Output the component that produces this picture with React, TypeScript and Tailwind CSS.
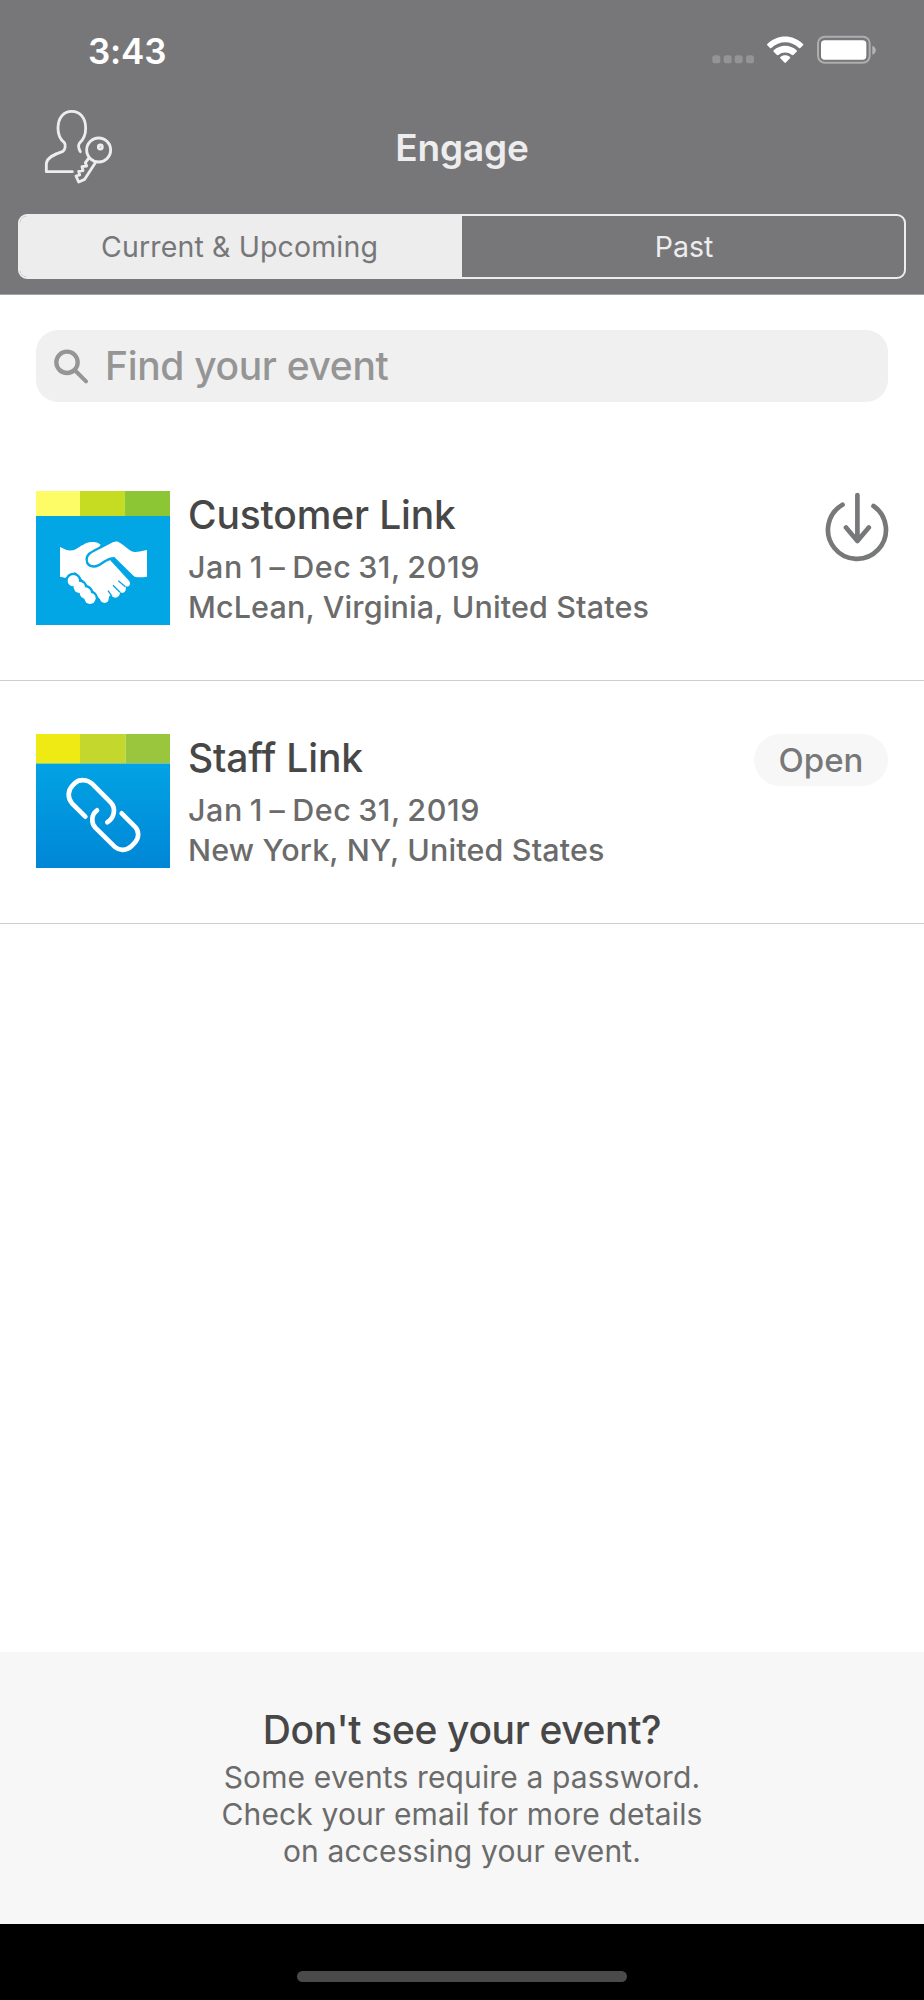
import type { ReactNode } from 'react';

type EventItem = {
    name: string;
    dates: string;
    location: string;
    icon: ReactNode;
    action: ReactNode;
};

function StatusIcons() {
    return (
        <svg width="165" height="30" viewBox="264 106 495 90" fill="white">
            <g fill="#949495">
                <rect x="265" y="167" width="24" height="24" rx="8" />
                <rect x="299" y="167" width="24" height="24" rx="8" />
                <rect x="332" y="167" width="24" height="24" rx="8" />
                <rect x="366" y="167" width="24" height="24" rx="8" />
            </g>
            <path d="M430 133C460 103 507 103 537 133Q539 135 537 137L529 145Q527 147 525 145C501 122 466 122 442 145Q440 147 438 145L430 137Q428 135 430 133Z" />
            <path d="M449 152C469 134 498 134 518 152Q520 154 518 156L508 166Q506 167 504 166C492 156 475 156 463 166Q461 167 459 166L449 156Q447 154 449 152Z" />
            <path d="M469 172C477 165 490 165 498 172Q500 174 498 176L485 189Q483.500 190 482 189L469 176Q467 174 469 172Z" />
            <rect x="582" y="111" width="155" height="78" rx="20" fill="none" stroke="#adadae" strokeWidth="6" />
            <rect x="591" y="122" width="136" height="58" rx="11" />
            <path d="M745 138C759 143 759 160 745 165Z" fill="#b4b4b5" />
        </svg>
    );
}

function ProfileKeyIcon() {
    return (
        <svg width="70" height="78" viewBox="130 320 210 234" fill="none" stroke="#ededed" strokeWidth="8.500" strokeLinecap="round" strokeLinejoin="round">
            <path d="M218 514H140V490C142 470 167 461 188 454C197 449 199 434 194 427C182 418 175 402 175 384C175 352 192 333 216 333C241 333 258 352 258 384C258 402 251 419 239 429C235 436 237 445 242 454" />
            <circle cx="297" cy="449" r="36" />
            <circle cx="302" cy="440" r="6" />
            <path d="M287 487L255 537L237 545L229 527L240 524L237 513L250 511L247 499L261 497L257 487L268 473" />
        </svg>
    );
}

function SearchIcon() {
    return (
        <svg width="36" height="36" viewBox="157 112 108 108" fill="none" stroke="#959595" strokeLinecap="round">
            <circle cx="199" cy="155" r="32" strokeWidth="13" />
            <path d="M222 178L256 212" strokeWidth="12" />
        </svg>
    );
}

function DownloadIcon() {
    return (
        <svg width="64" height="70" viewBox="825 492 64 70" fill="none" stroke="#77787a" strokeWidth="4.700" strokeLinecap="round" strokeLinejoin="round" className="mt-px -mr-px">
            <path d="M842.500 504.700A29 29 0 1 0 873.500 506" />
            <path d="M857.400 495V541M846 527.500L857.400 541L868.800 527.500" />
        </svg>
    );
}

function HandshakeTile() {
    return (
        <svg width="134" height="134" viewBox="48 64 402 402" className="shrink-0">
            <rect x="48" y="64" width="402" height="402" fill="#02a6e5" />
            <rect x="48" y="64" width="132" height="75" fill="#fdfb66" />
            <rect x="180" y="64" width="137" height="75" fill="#c5dc22" />
            <rect x="317" y="64" width="133" height="75" fill="#8dc635" />
            <g transform="translate(105 195)" fill="white">
                <path d="M15 37C30 44 40 50 57 46C80 34 95 20 112 22C122 21 132 25 137 30L120 60L165 76L222 138C230 148 222 159 211 155C217 168 206 180 195 172C196 184 183 196 170 184C160 178 163 192 159 200C152 208 138 206 135 194L60 112L33 130L15 126Z" />
                <path d="M190 138L211 156M174 152L195 173M159 168L171 185" stroke="#02a6e5" strokeWidth="4" />
                <g stroke="#02a6e5" strokeWidth="14">
                    <circle cx="55" cy="138" r="17" />
                    <circle cx="73" cy="158" r="17" />
                    <circle cx="91" cy="175" r="17" />
                    <circle cx="105" cy="191" r="17" />
                </g>
                <circle cx="55" cy="138" r="17" />
                <circle cx="73" cy="158" r="17" />
                <circle cx="91" cy="175" r="17" />
                <circle cx="105" cy="191" r="17" />
                <path
                    d="M276 46C262 48 240 56 230 50C220 44 205 30 190 22C183 19 176 22 165 27L117 52C100 60 96 72 100 83C105 93 118 94 128 89C145 80 155 68 178 67L236 124C243 130 262 128 276 126Z"
                    stroke="#02a6e5"
                    strokeWidth="14"
                    className="[paint-order:stroke]"
                />
            </g>
        </svg>
    );
}

function ChainTile() {
    return (
        <svg width="134" height="134" viewBox="48 73 402 402" className="shrink-0">
            <defs>
                <linearGradient id="chainBg" x1="0" y1="0" x2="0" y2="1">
                    <stop offset="0" stopColor="#02a3e4" />
                    <stop offset="1" stopColor="#0086d6" />
                </linearGradient>
            </defs>
            <rect x="48" y="161" width="402" height="314" fill="url(#chainBg)" />
            <rect x="48" y="73" width="132" height="88" fill="#f0ea14" />
            <rect x="180" y="73" width="137" height="88" fill="#c4d72d" />
            <rect x="317" y="73" width="133" height="88" fill="#9ac63d" />
            <g fill="none" stroke="white" strokeWidth="14" strokeLinecap="round">
                <path d="M196 321L156 281C142 265 143 242 158 227L165 220C178 208 203 209 216 222L272 278C289 296 283 325 262 338" />
                <path d="M231 302C212 316 214 341 226 354L286 413C299 424 320 423 334 410L345 398C358 384 357 365 346 352L305 311" />
            </g>
        </svg>
    );
}

const events: EventItem[] = [
    {
        name: 'Customer Link',
        dates: 'Jan 1 – Dec 31, 2019',
        location: 'McLean, Virginia, United States',
        icon: <HandshakeTile />,
        action: <DownloadIcon />,
    },
    {
        name: 'Staff Link',
        dates: 'Jan 1 – Dec 31, 2019',
        location: 'New York, NY, United States',
        icon: <ChainTile />,
        action: (
            <button className="h-[52px] w-[134px] rounded-full bg-[#f7f7f7] text-[33px] leading-[52px] font-medium text-[#77787a]">
                Open
            </button>
        ),
    },
];

function EventRow({ event }: { event: EventItem }) {
    return (
        <li className="flex h-[243px] items-start border-b border-[#cecece] px-9 pt-[53px]">
            {event.icon}
            <div className="ml-[18px] flex-1 whitespace-nowrap font-medium">
                <h2 className="mt-0.5 text-[39px] leading-[44px] tracking-[-0.15px] text-[#474747]">{event.name}</h2>
                <p className="mt-2.5 text-[30.5px] leading-10 tracking-[0.58px] text-[#6b6b6b] [word-spacing:-2px]">{event.dates}</p>
                <p className="text-[30.5px] leading-10 tracking-[0.14px] text-[#6b6b6b]">{event.location}</p>
            </div>
            {event.action}
        </li>
    );
}

export default function App() {
    return (
        <div className="flex h-[2000px] w-[924px] flex-col bg-white font-['Inter','Liberation_Sans',sans-serif]">
            <header className="h-[295px] border-b border-[#a3a3a4] bg-[#777779]">
                <div className="flex h-[100px] items-start justify-between pr-[47px] pl-[88px]">
                    <span className="mt-[30px] text-[35px] leading-[42px] font-semibold tracking-[-0.2px] text-white">3:43</span>
                    <div className="mt-[35px]">
                        <StatusIcons />
                    </div>
                </div>
                <div className="grid h-[114px] grid-cols-3 items-start px-[43px]">
                    <div className="mt-[7px]">
                        <ProfileKeyIcon />
                    </div>
                    <h1 className="mt-[26px] text-center text-[37px] leading-[44px] font-semibold tracking-[-0.2px] text-[#ededed]">Engage</h1>
                </div>
                <div className="mx-[18px] flex h-[65px] overflow-hidden rounded-[9px] border-2 border-[#ededed] text-[28.5px]">
                    <button className="w-1/2 bg-[#ededed] pt-0.5 pr-[3px] tracking-[0.14px] text-[#777779]">Current &amp; Upcoming</button>
                    <button className="w-1/2 pt-0.5 pl-0.5 text-[#ededed]">Past</button>
                </div>
            </header>

            <main className="flex-1">
                <div className="mx-9 mt-[35px] flex h-[72px] items-center rounded-[22px] bg-[#f0f0f0] pl-[17px]">
                    <SearchIcon />
                    <span className="ml-4 text-[39px] font-medium tracking-[-0.33px] text-[#959595]">Find your event</span>
                </div>
                <ul className="mt-9">
                    {events.map((event) => (
                        <EventRow key={event.name} event={event} />
                    ))}
                </ul>
            </main>

            <section className="h-[272px] bg-[#f7f7f7] pt-[54px] text-center">
                <h2 className="text-[39px] leading-[48px] font-medium tracking-[-0.36px] text-[#474747]">Don't see your event?</h2>
                <p className="mt-[5px] text-[30px] leading-[37px] tracking-[0.14px] text-[#6b6b6b]">
                    Some events require a password.
                    <br />
                    Check your email for more details
                    <br />
                    on accessing your event.
                </p>
            </section>

            <footer className="flex h-[76px] justify-center bg-black pt-[47px]">
                <div className="h-[11px] w-[330px] rounded-full bg-[#4a4a4a]" />
            </footer>
        </div>
    );
}
